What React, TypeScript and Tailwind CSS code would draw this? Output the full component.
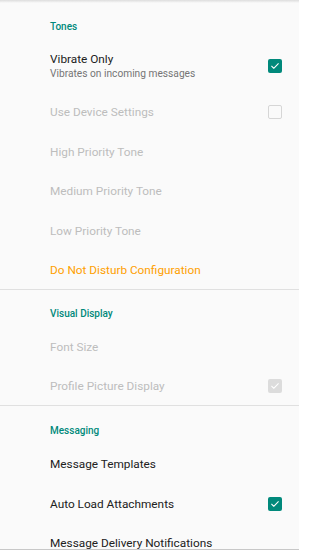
import React from "react";

type CheckState = "checked" | "unchecked" | "disabledChecked" | "disabledUnchecked" | undefined;

function Check({ state }: { state: CheckState }) {
  if (!state) return null;
  if (state === "checked" || state === "disabledChecked") {
    const bg = state === "checked" ? "bg-[#00897b]" : "bg-[#dcdcdc]";
    return (
      <div className={`w-[14px] h-[14px] rounded-[2px] ${bg} flex items-center justify-center`}>
        <svg width="10" height="10" viewBox="0 0 24 24" fill="none">
          <path d="M4 12.5l5 5L20 6.5" stroke="white" strokeWidth="2.6" strokeLinecap="round" strokeLinejoin="round" />
        </svg>
      </div>
    );
  }
  return <div className="w-[14px] h-[14px] rounded-[2px] border-[1.5px] border-[#d6d6d6]" />;
}

function Row({
  title,
  color = "text-[#212121]",
  check,
}: {
  title: string;
  color?: string;
  check?: CheckState;
}) {
  return (
    <div className="h-[39.5px] flex items-center justify-between pl-[50px] pr-[17px] pt-[2px]">
      <span className={`text-[11.8px] leading-[16px] ${color}`}>{title}</span>
      <Check state={check} />
    </div>
  );
}

function Header({ title, pt, pb }: { title: string; pt: string; pb: string }) {
  return (
    <div className={`pl-[50px] ${pt} ${pb}`}>
      <div className="text-[10px] leading-[14px] font-medium text-[#00897b]">{title}</div>
    </div>
  );
}

export default function App() {
  return (
    <div
      className="relative w-[299px] h-[550px] overflow-hidden bg-[#fafafa]"
      style={{ fontFamily: "Roboto, 'Noto Sans', sans-serif" }}
    >
      <div className="absolute top-0 left-0 right-0 h-[3px] bg-gradient-to-b from-[#dddddd] to-transparent" />
      <Header title="Tones" pt="pt-[20px]" pb="pb-[8px]" />
      <div className="flex items-center justify-between pl-[50px] pr-[17px] pt-[9px] pb-[10.5px]">
        <div>
          <div className="text-[11.8px] leading-[16px] text-[#212121]">Vibrate Only</div>
          <div className="text-[10.2px] leading-[14px] text-[#757575]">Vibrates on incoming messages</div>
        </div>
        <Check state="checked" />
      </div>
      <Row title="Use Device Settings" color="text-[#bdbdbd]" check="disabledUnchecked" />
      <Row title="High Priority Tone" color="text-[#bdbdbd]" />
      <Row title="Medium Priority Tone" color="text-[#bdbdbd]" />
      <Row title="Low Priority Tone" color="text-[#bdbdbd]" />
      <Row title="Do Not Disturb Configuration" color="text-[#ffa000]" />
      <div className="h-px bg-[#e0e0e0]" />
      <Header title="Visual Display" pt="pt-[17px]" pb="pb-[5px]" />
      <Row title="Font Size" color="text-[#bdbdbd]" />
      <Row title="Profile Picture Display" color="text-[#bdbdbd]" check="disabledChecked" />
      <div className="h-px bg-[#e0e0e0]" />
      <Header title="Messaging" pt="pt-[18px]" pb="pb-[5.5px]" />
      <Row title="Message Templates" />
      <Row title="Auto Load Attachments" check="checked" />
      <Row title="Message Delivery Notifications" />
      <div className="absolute bottom-0 left-0 right-0 h-px bg-[#c8c8c8]" />
    </div>
  );
}
